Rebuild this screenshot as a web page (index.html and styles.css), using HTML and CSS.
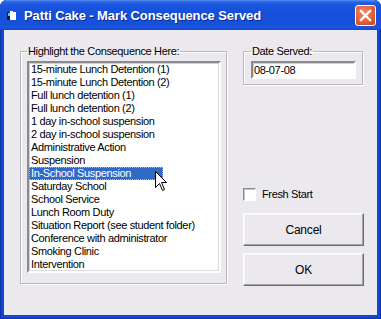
FILE: index.html
```html
<!DOCTYPE html>
<html>
<head>
<meta charset="utf-8">
<title>Patti Cake - Mark Consequence Served</title>
<link rel="stylesheet" href="styles.css">
</head>
<body>
<div class="window">
  <div class="titlebar">
    <svg class="app-icon" width="10" height="10" viewBox="0 0 10 10">
      <rect x="0" y="1" width="3" height="8" fill="#1a1a1a"/>
      <rect x="3" y="1" width="6" height="8" fill="#ffffff"/>
      <rect x="1" y="2" width="2" height="3" fill="#33d0f0"/>
      <rect x="3" y="0" width="3" height="2" fill="#ffffff"/>
    </svg>
    <span class="title">Patti Cake - Mark Consequence Served</span>
    <div class="close">
      <svg width="13" height="13" viewBox="0 0 13 13">
        <path d="M2 2 L11 11 M11 2 L2 11" stroke="#ffffff" stroke-width="2.4" stroke-linecap="square"/>
      </svg>
    </div>
  </div>
  <div class="client">
    <fieldset class="group list-group">
      <legend>Highlight the Consequence Here:</legend>
      <div class="listbox">
        <div class="item">15-minute Lunch Detention (1)</div>
        <div class="item">15-minute Lunch Detention (2)</div>
        <div class="item">Full lunch detention (1)</div>
        <div class="item">Full lunch detention (2)</div>
        <div class="item">1 day in-school suspension</div>
        <div class="item">2 day in-school suspension</div>
        <div class="item">Administrative Action</div>
        <div class="item">Suspension</div>
        <div class="item selected">In-School Suspension</div>
        <div class="item">Saturday School</div>
        <div class="item">School Service</div>
        <div class="item">Lunch Room Duty</div>
        <div class="item">Situation Report (see student folder)</div>
        <div class="item">Conference with administrator</div>
        <div class="item">Smoking Clinic</div>
        <div class="item">Intervention</div>
      </div>
    </fieldset>
    <div class="side">
      <fieldset class="group date-group">
        <legend>Date Served:</legend>
        <div class="textbox">08-07-08</div>
      </fieldset>
      <label class="check"><span class="box"></span>Fresh Start</label>
      <div class="button cancel">Cancel</div>
      <div class="button ok">OK</div>
    </div>
  </div>
  <svg class="cursor" width="13" height="21" viewBox="0 0 13 21">
    <path d="M0.5 0.5 L0.5 16.5 L4.5 12.5 L7.5 19.5 L9.5 18.5 L6.5 11.5 L11.5 11.5 Z" fill="#ffffff" stroke="#000000" stroke-width="1"/>
  </svg>
</div>
</body>
</html>
```

FILE: styles.css
```css
html, body {
  margin: 0;
  padding: 0;
  background: #ffffff;
}

.window {
  position: relative;
  width: 381px;
  height: 319px;
  box-sizing: border-box;
  background: #1146d2;
  border-radius: 7px 7px 0 0;
  display: flex;
  flex-direction: column;
  overflow: hidden;
  box-shadow: inset 1px 0 0 #0a34b0, inset -1px 0 0 #0a34b0, inset 0 -1px 0 #0a34b0;
}

.titlebar {
  height: 30px;
  flex: none;
  display: flex;
  align-items: center;
  background: linear-gradient(to bottom, #5a8eef 0px, #2862e4 2px, #1a55de 5px, #164fd9 45%, #1750d9 80%, #1a55de 92%, #1146d2 100%);
  border-radius: 7px 7px 0 0;
}

.app-icon {
  margin-left: 7px;
  margin-top: 1px;
  flex: none;
}

.title {
  margin-left: 7px;
  font-family: "Liberation Sans", Arial, sans-serif;
  font-weight: bold;
  font-size: 13px;
  letter-spacing: -0.1px;
  color: #ffffff;
  text-shadow: 1px 1px 0 #0c2a8a;
  white-space: nowrap;
  flex: 1;
}

.close {
  width: 21px;
  height: 21px;
  box-sizing: border-box;
  margin-right: 5px;
  margin-top: 1px;
  border: 1px solid #ffffff;
  border-radius: 3px;
  background: radial-gradient(circle at 40% 35%, #ee8a6a 0%, #e2603c 55%, #c9401c 100%);
  display: flex;
  align-items: center;
  justify-content: center;
}

.client {
  flex: 1;
  margin: 0 4px 4px;
  background: #ebe9ed;
  display: flex;
  padding: 15px 0 0 16px;
  gap: 16px;
  font-family: "Liberation Sans", Arial, sans-serif;
  font-size: 11px;
  letter-spacing: -0.35px;
  color: #000000;
}

.group {
  margin: 0;
  border: 1px solid #b9b8bc;
  box-shadow: 1px 1px 0 #ffffff, inset 1px 1px 0 #ffffff;
}

.group legend {
  padding: 0 1px;
  line-height: 13px;
  font-size: 11px;
}

.list-group {
  width: 207px;
  height: 239px;
  box-sizing: border-box;
  padding: 3px 5px 9px 6px;
}

.listbox {
  height: 212px;
  box-sizing: border-box;
  background: #ffffff;
  border: 2px solid;
  border-color: #8a898d #ffffff #ffffff #8a898d;
  box-shadow: inset 1px 1px 0 #d2d0d4, inset -1px -1px 0 #dcdadf;
  padding: 0;
  overflow: hidden;
}

.item {
  height: 13px;
  line-height: 13px;
  padding-left: 2px;
  white-space: nowrap;
}

.item.selected {
  width: 134px;
  background: #316ac5;
  color: #ffffff;
  box-sizing: border-box;
  outline: 1px dotted #d7b46a;
  outline-offset: -1px;
}

.side {
  width: 121px;
  display: flex;
  flex-direction: column;
}

.date-group {
  width: 120px;
  box-sizing: border-box;
  padding: 3px 6px 5px 7px;
}

.textbox {
  height: 18px;
  box-sizing: border-box;
  background: #ffffff;
  border: 2px solid;
  border-color: #8a898d #ffffff #ffffff #8a898d;
  box-shadow: inset 1px 1px 0 #d2d0d4;
  padding-left: 1px;
  line-height: 14px;
}

.check {
  margin-top: 103px;
  display: flex;
  align-items: center;
  height: 13px;
  line-height: 13px;
}

.box {
  width: 13px;
  height: 13px;
  box-sizing: border-box;
  background: #ffffff;
  border: 1px solid;
  border-color: #8c8b90 #ffffff #ffffff #8c8b90;
  box-shadow: inset 1px 1px 0 #c4c3c7;
  margin-right: 6px;
}

.button {
  height: 33px;
  box-sizing: border-box;
  border: 1px solid;
  border-color: #ffffff #6e6d72 #6e6d72 #ffffff;
  box-shadow: inset -1px -1px 0 #a3a2a7, inset 1px 1px 0 #f6f5f8;
  display: flex;
  align-items: center;
  justify-content: center;
  font-size: 12px;
  letter-spacing: -0.2px;
}

.cancel {
  margin-top: 12px;
}

.ok {
  margin-top: 7px;
}

.cursor {
  position: absolute;
  left: 155px;
  top: 171px;
}
```
